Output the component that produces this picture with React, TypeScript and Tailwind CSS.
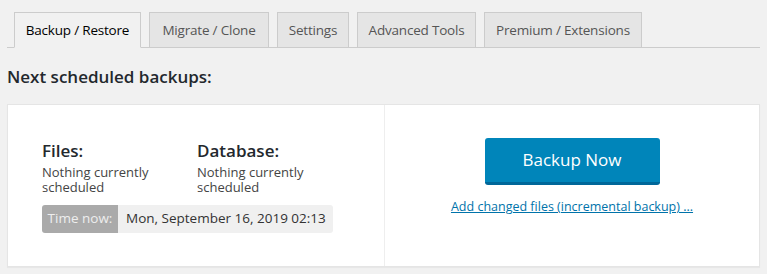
const tabs = [
  { label: 'Backup / Restore', w: 'w-[127px]' },
  { label: 'Migrate / Clone', w: 'w-[120px]' },
  { label: 'Settings', w: 'w-[72px]' },
  { label: 'Advanced Tools', w: 'w-[119px]' },
  { label: 'Premium / Extensions', w: 'w-[158px]' },
];

const font = { fontFamily: '"Open Sans", "Noto Sans", sans-serif' };

export default function App() {
  return (
    <div className="h-[274px] w-full bg-[#f1f1f1] px-[7px] text-[#444]" style={font}>
      {/* Tabs */}
      <div className="flex gap-[8px] border-b border-[#ccc] pl-[7px] pt-[12px]">
        {tabs.map((t, i) => (
          <div
            key={t.label}
            className={
              i === 0
                ? `${t.w} -mb-px flex h-[36px] items-center justify-center border border-[#ccc] border-b-[#f1f1f1] bg-[#f1f1f1] text-[13.5px] tracking-[-0.2px] text-black`
                : `${t.w} flex h-[35px] items-center justify-center border border-b-0 border-[#ccc] bg-[#e5e5e5] text-[13.5px] tracking-[-0.2px] text-[#555]`
            }
          >
            {t.label}
          </div>
        ))}
      </div>

      <h2 className="mt-[17px] text-[17px] font-semibold leading-[24px] text-[#23282d]">Next scheduled backups:</h2>

      {/* Schedule box */}
      <div className="mt-[15px] flex h-[163px] border border-[#e5e5e5] bg-white shadow-[0_1px_1px_rgba(0,0,0,0.04)]">
        <div className="flex w-[377px] flex-col justify-center border-r border-[#eee] pl-[34px]">
          <div className="flex">
            <div className="w-[155px]">
              <div className="text-[17px] font-semibold leading-[24px] text-[#23282d]">Files:</div>
              <div className="mt-[2px] text-[13px] leading-[15px] text-[#444]">
                Nothing currently
                <br />
                scheduled
              </div>
            </div>
            <div>
              <div className="text-[17px] font-semibold leading-[24px] text-[#23282d]">Database:</div>
              <div className="mt-[2px] text-[13px] leading-[15px] text-[#444]">
                Nothing currently
                <br />
                scheduled
              </div>
            </div>
          </div>
          <div className="mt-[10px] flex h-[28px] w-[291px] overflow-hidden rounded-[3px] text-[13.5px]">
            <div className="flex w-[76px] items-center justify-center bg-[#aaa] text-[#eee]">Time now:</div>
            <div className="flex flex-1 items-center bg-[#f0f0f0] pl-[8px] text-[#333]">Mon, September 16, 2019 02:13</div>
          </div>
        </div>

        <div className="flex flex-1 flex-col items-center pt-[33px]">
          <button className="h-[47px] w-[175px] rounded-[3px] border-b-[3px] border-[#006799] bg-[#0085ba] text-[17px] text-white">
            Backup Now
          </button>
          <a href="#" className="mt-[14px] text-[12.5px] leading-[15px] text-[#0073aa] underline">
            Add changed files (incremental backup) ...
          </a>
        </div>
      </div>
    </div>
  );
}
